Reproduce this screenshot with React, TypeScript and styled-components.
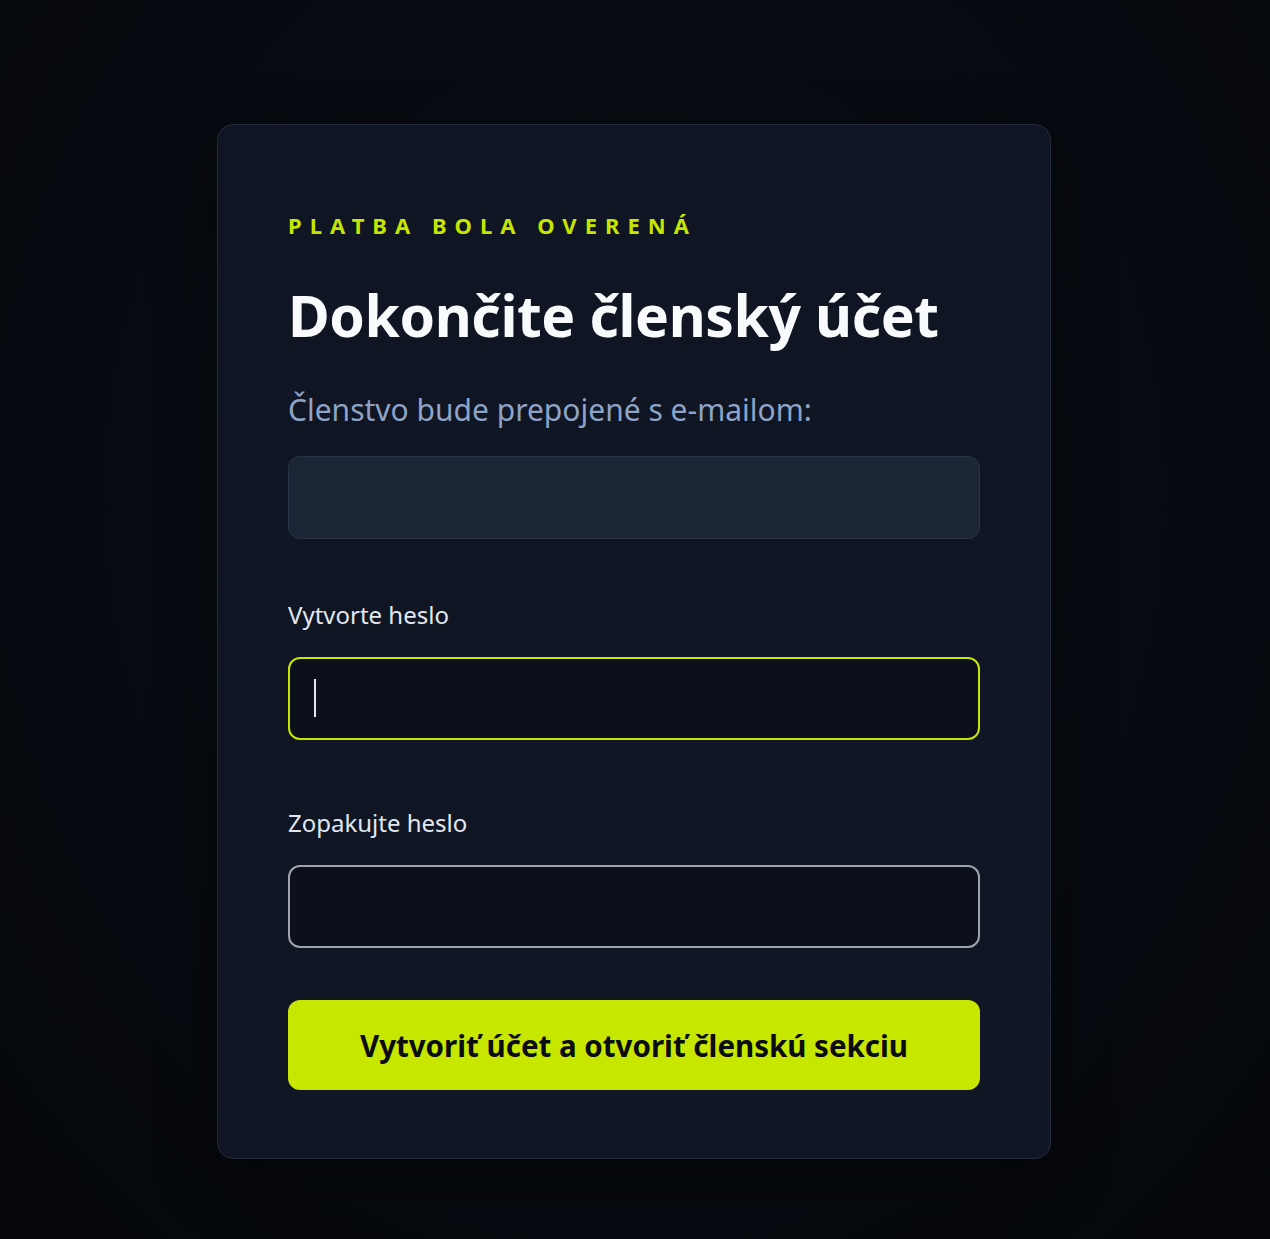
import styled, { createGlobalStyle } from 'styled-components';

const GlobalStyle = createGlobalStyle`
  html, body {
    margin: 0;
    padding: 0;
    background: #070a10;
  }
  * {
    box-sizing: border-box;
  }
`;

const FONT = `'Noto Sans', 'Open Sans', sans-serif`;

interface FieldProps {
  active?: boolean;
}

function PasswordField({ label, active }: { label: string; active?: boolean }) {
  return (
    <Field>
      <Label>{label}</Label>
      <InputWrap>
        <Input type="password" active={active} />
        {active && <Caret />}
      </InputWrap>
    </Field>
  );
}

function App() {
  return (
    <Page>
      <GlobalStyle />
      <Card>
        <Eyebrow>{'Platba bola overená'}</Eyebrow>
        <Title>{'Dokončite členský účet'}</Title>
        <Subtitle>{'Členstvo bude prepojené s e-mailom:'}</Subtitle>
        <EmailBox />
        <PasswordField label="Vytvorte heslo" active />
        <PasswordField label="Zopakujte heslo" />
        <SubmitButton type="button">{'Vytvoriť účet a otvoriť členskú sekciu'}</SubmitButton>
      </Card>
    </Page>
  );
}

const Page = styled.main`
  min-height: 1239px;
  padding: 124px 2px 0 0;
  display: flex;
  justify-content: center;
  align-items: flex-start;
  background: radial-gradient(ellipse at 50% 40%, #0b0f17 0%, #070a10 60%, #05070c 100%);
  font-family: ${FONT};
`;

const Card = styled.section`
  width: 834px;
  padding: 86px 70px 68px;
  display: flex;
  flex-direction: column;
  background: linear-gradient(180deg, #0f1522 0%, #101624 100%);
  border: 1px solid #242d3c;
  border-radius: 16px;
  box-shadow: 0 20px 60px rgba(0, 0, 0, 0.45);
`;

const Eyebrow = styled.p`
  margin: 0;
  font-size: 22px;
  line-height: 28px;
  font-weight: 700;
  letter-spacing: 8px;
  text-transform: uppercase;
  color: #c6e500;
`;

const Title = styled.h1`
  margin: 42px 0 0;
  font-size: 57px;
  line-height: 68px;
  font-weight: 700;
  letter-spacing: -0.4px;
  color: #f8fafc;
`;

const Subtitle = styled.p`
  margin: 41px 0 0;
  font-size: 30px;
  line-height: 40px;
  font-weight: 400;
  color: #8ea3c6;
`;

const EmailBox = styled.div`
  margin-top: 26px;
  height: 83px;
  background: #1c2536;
  border: 1px solid #2a3447;
  border-radius: 12px;
`;

const Field = styled.div`
  margin-top: 60px;
  display: flex;
  flex-direction: column;
  gap: 27px;

  & + & {
    margin-top: 67px;
  }
`;

const Label = styled.label`
  font-size: 24px;
  line-height: 31px;
  color: #e2e8f0;
`;

const InputWrap = styled.div`
  position: relative;
`;

const Input = styled.input<FieldProps>`
  display: block;
  width: 100%;
  height: 83px;
  padding: 0 26px;
  background: #0c0f1c;
  border: 2px solid ${({ active }) => (active ? '#c6e500' : '#9ea3ad')};
  border-radius: 12px;
  outline: none;
  color: #f8fafc;
  font-family: ${FONT};
  font-size: 22px;
`;

const Caret = styled.span`
  position: absolute;
  left: 26px;
  top: 22px;
  width: 2px;
  height: 38px;
  background: #e5e7eb;
`;

const SubmitButton = styled.button`
  margin-top: 52px;
  height: 90px;
  border: none;
  border-radius: 12px;
  background: #c7e700;
  color: #0a0c10;
  font-family: ${FONT};
  font-size: 29.5px;
  font-weight: 700;
  cursor: pointer;
`;

export default App;
